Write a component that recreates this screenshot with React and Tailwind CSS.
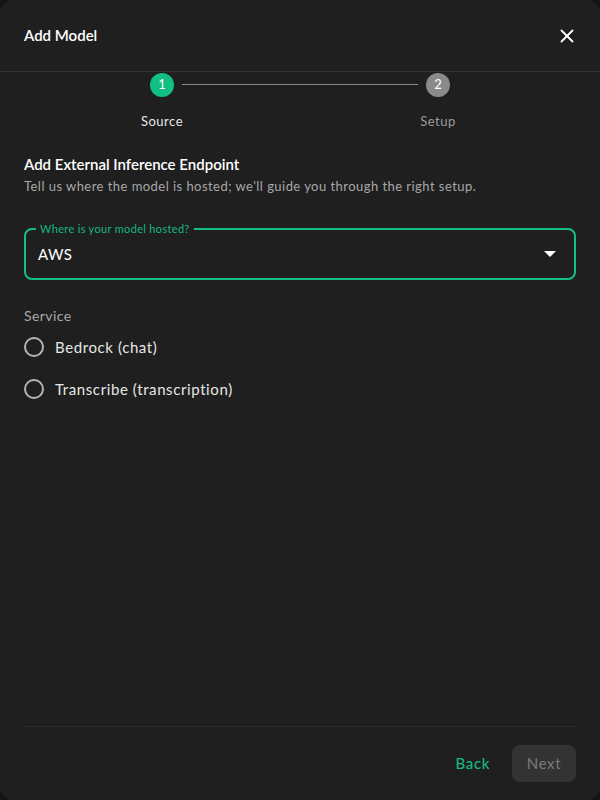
import { X } from 'lucide-react';

function Step({ n, label, active }) {
  return (
    <div className="flex flex-col items-center">
      <div
        className={
          active
            ? "w-6 h-6 rounded-full bg-[#12bf83] text-white text-[13px] flex items-center justify-center"
            : "w-6 h-6 rounded-full bg-[#8a8a8a] text-white text-[13px] flex items-center justify-center"
        }
      >
        {n}
      </div>
      <span
        className={
          active
            ? "mt-[15px] text-[13px] tracking-[0.04em] text-[#e6e6e6]"
            : "mt-[15px] text-[13px] tracking-[0.04em] text-[#9a9a9a]"
        }
      >
        {label}
      </span>
    </div>
  );
}

function Radio({ label }) {
  return (
    <label className="flex items-center gap-[11px] h-[42px]">
      <span className="w-[20px] h-[20px] rounded-full border-2 border-[#b5b5b5]" />
      <span className="text-[15px] tracking-[0.04em] text-[#e6e6e6]">{label}</span>
    </label>
  );
}

export default function App() {
  return (
    <div className="w-[600px] h-[800px] bg-[#161616] font-['Lato',sans-serif]">
      <div className="w-full h-full bg-[#1f1f1f] rounded-[14px] flex flex-col">
        <div className="h-[72px] flex items-center justify-between px-6 border-b border-[#333333]">
          <h2 className="text-[15px] font-semibold text-white">Add Model</h2>
          <button className="text-white mr-[-2px]">
            <X size={22} strokeWidth={2} />
          </button>
        </div>

        <div className="px-6 flex-1 flex flex-col">
          <div className="relative grid grid-cols-2 pt-[1px]">
            <div className="absolute top-[12px] left-[158px] right-[158px] h-px bg-[#8a8a8a]" />
            <Step n="1" label="Source" active />
            <Step n="2" label="Setup" />
          </div>

          <h3 className="mt-[22px] text-[15px] font-semibold text-white leading-5">
            Add External Inference Endpoint
          </h3>
          <p className="mt-[3px] text-[13px] tracking-[0.035em] text-[#a8a8a8]">
            Tell us where the model is hosted; we'll guide you through the right setup.
          </p>

          <div className="relative mt-[32px] h-[52px] rounded-[8px] border-2 border-[#12bf83] flex items-center justify-between px-[12px]">
            <span className="absolute -top-[9px] left-[10px] px-[4px] bg-[#1f1f1f] text-[11px] tracking-[0.03em] text-[#17b87f]">
              Where is your model hosted?
            </span>
            <span className="text-[15px] tracking-[0.03em] text-white">AWS</span>
            <svg width="12" height="6" viewBox="0 0 12 6" className="mr-[6px]">
              <path d="M0 0 L12 0 L6 6 Z" fill="#ffffff" />
            </svg>
          </div>

          <div className="mt-[25px] text-[14px] tracking-[0.03em] text-[#a8a8a8]">Service</div>
          <div className="flex flex-col">
            <Radio label="Bedrock (chat)" />
            <Radio label="Transcribe (transcription)" />
          </div>

          <div className="mt-auto border-t border-[#2e2e2e] h-[74px] flex items-center justify-end gap-[22px]">
            <button className="text-[15px] tracking-[0.04em] text-[#17b87f] font-medium">Back</button>
            <button className="w-[64px] h-[37px] rounded-[8px] bg-[#333333] text-[15px] tracking-[0.04em] text-[#7a7a7a]">Next</button>
          </div>
        </div>
      </div>
    </div>
  );
}
